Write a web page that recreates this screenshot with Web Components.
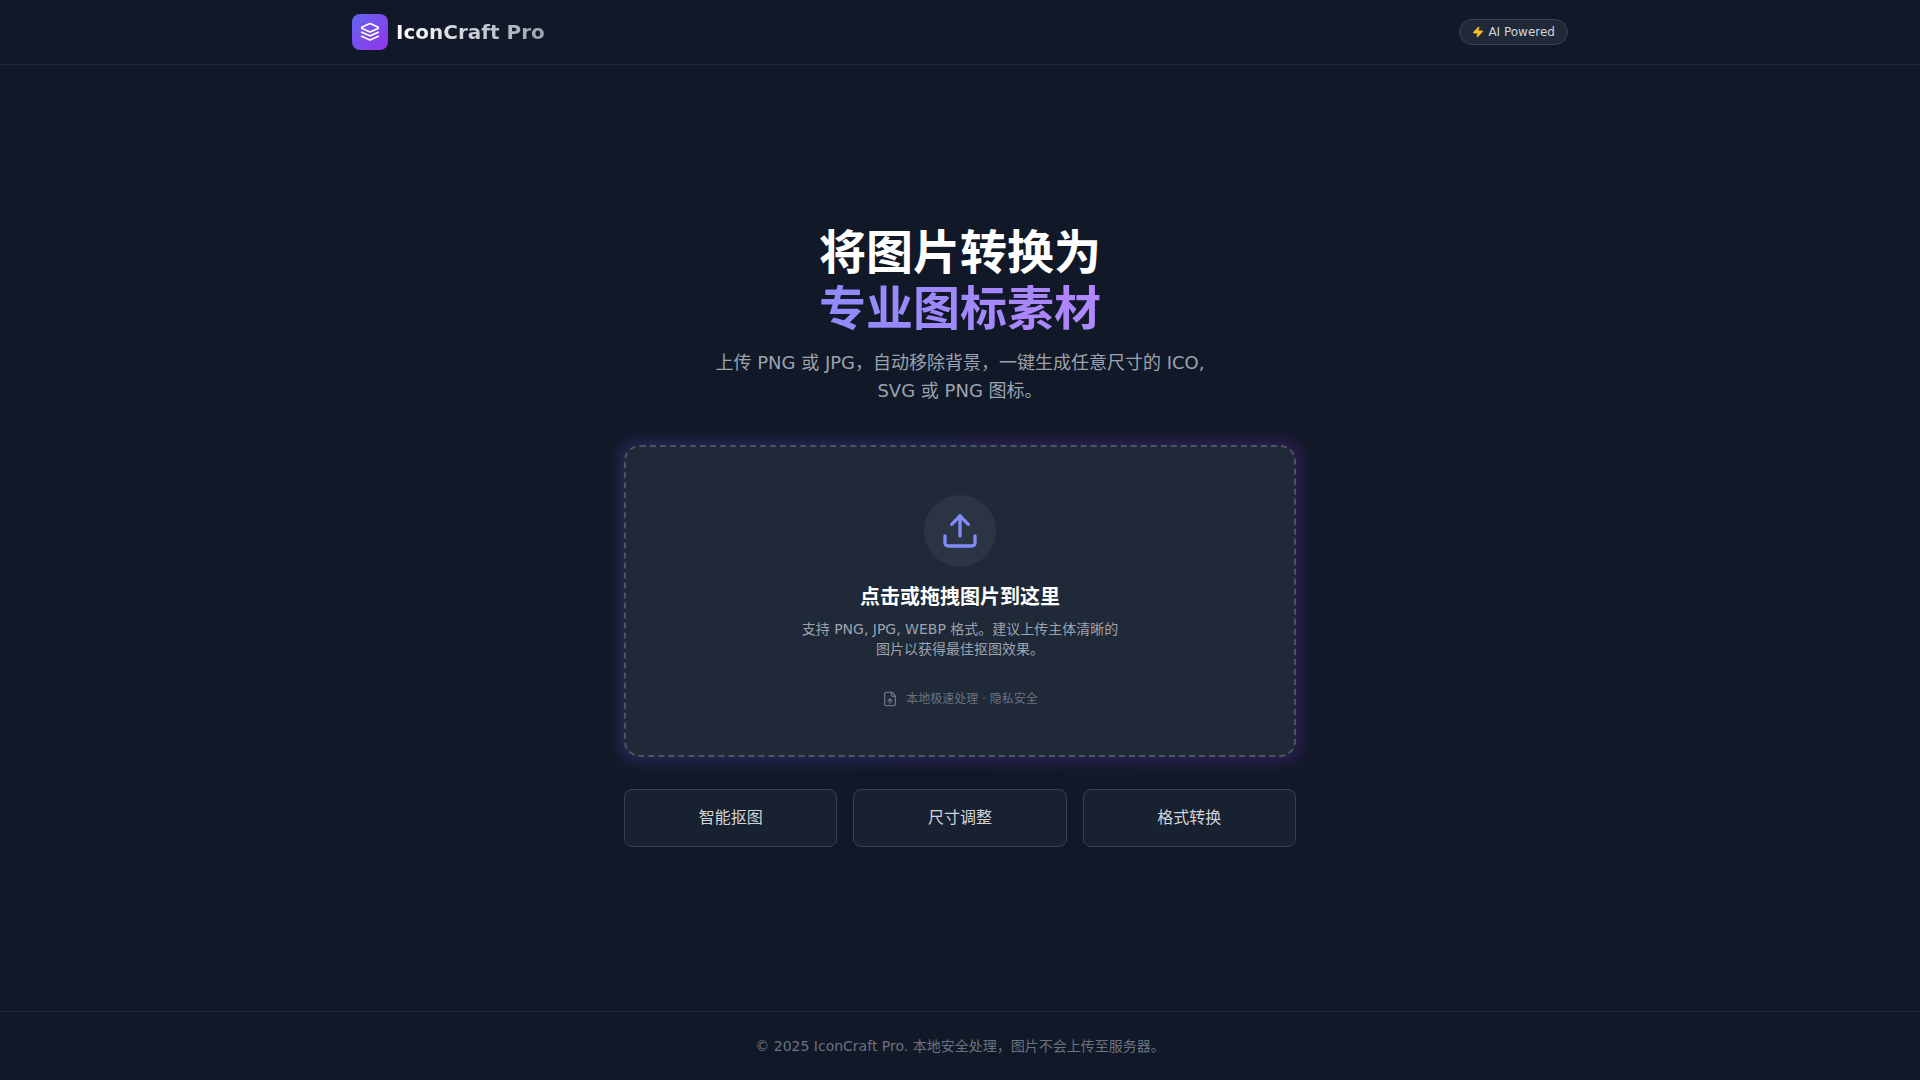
<!DOCTYPE html>
<html lang="zh-CN">
<head>
<meta charset="UTF-8">
<meta name="viewport" content="width=device-width, initial-scale=1.0">
<title>IconCraft Pro</title>
<style>
  body {
    margin: 0;
    background-color: #111827;
    color: #fff;
    font-family: "DejaVu Sans", "Noto Sans CJK SC", sans-serif;
    font-size: 16px;
    line-height: 24px;
  }
</style>
</head>
<body>
<icon-craft-app>
  <app-header slot="header">
    IconCraft Pro
    <status-badge slot="actions">AI Powered</status-badge>
  </app-header>

  <hero-title>
    将图片转换为
    <span slot="accent">专业图标素材</span>
    <span slot="description">上传 PNG 或 JPG，自动移除背景，一键生成任意尺寸的 ICO, SVG 或 PNG 图标。</span>
  </hero-title>

  <upload-zone>
    点击或拖拽图片到这里
    <span slot="hint">支持 PNG, JPG, WEBP 格式。建议上传主体清晰的图片以获得最佳抠图效果。</span>
    <span slot="note">本地极速处理 · 隐私安全</span>
  </upload-zone>

  <feature-list>
    <feature-card>智能抠图</feature-card>
    <feature-card>尺寸调整</feature-card>
    <feature-card>格式转换</feature-card>
  </feature-list>

  <app-footer slot="footer">© 2025 IconCraft Pro. 本地安全处理，图片不会上传至服务器。</app-footer>
</icon-craft-app>

<script>
class IconCraftApp extends HTMLElement {
  constructor() {
    super()
    this.attachShadow({ mode: 'open' })
  }

  connectedCallback() {
    this.shadowRoot.innerHTML = `
      <style>
        :host {
          min-height: 100vh;
          display: flex;
          flex-direction: column;
        }

        main {
          flex: 1;
          display: flex;
          flex-direction: column;
          align-items: center;
          justify-content: center;
          padding: 48px 16px 52px;
        }

        .content {
          width: 100%;
          max-width: 672px;
          display: flex;
          flex-direction: column;
        }
      </style>

      <slot name="header"></slot>
      <main>
        <div class="content"><slot></slot></div>
      </main>
      <slot name="footer"></slot>
    `
  }
}

class AppHeader extends HTMLElement {
  constructor() {
    super()
    this.attachShadow({ mode: 'open' })
  }

  connectedCallback() {
    this.shadowRoot.innerHTML = `
      <style>
        :host {
          display: block;
        }

        header {
          border-bottom: 1px solid #1f2937;
        }

        .bar {
          max-width: 1216px;
          height: 64px;
          margin: 0 auto;
          padding: 0 32px;
          display: flex;
          align-items: center;
          justify-content: space-between;
        }

        .brand {
          display: flex;
          align-items: center;
          gap: 8px;
        }

        .logo {
          display: flex;
          padding: 8px;
          border-radius: 8px;
          background: linear-gradient(to bottom right, #6366f1, #9333ea);
        }

        .name {
          font-size: 20px;
          font-weight: 700;
          line-height: 28px;
          color: transparent;
          background: linear-gradient(to right, #fff, #9ca3af);
          -webkit-background-clip: text;
          background-clip: text;
        }
      </style>

      <header>
        <div class="bar">
          <div class="brand">
            <div class="logo">
              <svg width="20" height="20" viewBox="0 0 24 24" fill="none" stroke="#fff" stroke-width="2" stroke-linecap="round" stroke-linejoin="round" aria-hidden="true">
                <path d="m12.83 2.18a2 2 0 0 0-1.66 0L2.6 6.08a1 1 0 0 0 0 1.83l8.58 3.91a2 2 0 0 0 1.66 0l8.58-3.9a1 1 0 0 0 0-1.83Z"/>
                <path d="m22 12.18-9.17 4.16a2 2 0 0 1-1.66 0L2 12.18"/>
                <path d="m22 17.18-9.17 4.16a2 2 0 0 1-1.66 0L2 17.18"/>
              </svg>
            </div>
            <span class="name"><slot></slot></span>
          </div>
          <slot name="actions"></slot>
        </div>
      </header>
    `
  }
}

class StatusBadge extends HTMLElement {
  constructor() {
    super()
    this.attachShadow({ mode: 'open' })
  }

  connectedCallback() {
    this.shadowRoot.innerHTML = `
      <style>
        :host {
          display: flex;
          align-items: center;
          gap: 4px;
          padding: 4px 12px;
          border: 1px solid #374151;
          border-radius: 999px;
          background-color: #1f2937;
          color: #d1d5db;
          font-size: 12px;
          line-height: 16px;
        }
      </style>

      <svg width="12" height="12" viewBox="0 0 24 24" fill="#fbbf24" stroke="#fbbf24" stroke-width="2" stroke-linecap="round" stroke-linejoin="round" aria-hidden="true">
        <path d="M4 14a1 1 0 0 1-.78-1.63l9.9-10.2a.5.5 0 0 1 .86.46l-1.92 6.02A1 1 0 0 0 13 10h7a1 1 0 0 1 .78 1.63l-9.9 10.2a.5.5 0 0 1-.86-.46l1.92-6.02A1 1 0 0 0 11 14z"/>
      </svg>
      <span><slot></slot></span>
    `
  }
}

class HeroTitle extends HTMLElement {
  constructor() {
    super()
    this.attachShadow({ mode: 'open' })
  }

  connectedCallback() {
    this.shadowRoot.innerHTML = `
      <style>
        :host {
          display: flex;
          flex-direction: column;
          align-items: center;
          gap: 12px;
          margin-bottom: 40px;
          text-align: center;
        }

        h1 {
          width: 100%;
          max-width: 512px;
          margin: 0;
          font-size: 47px;
          font-weight: 700;
          line-height: 56px;
        }

        .accent {
          display: block;
          color: transparent;
          background: linear-gradient(to right, #818cf8, #c084fc);
          -webkit-background-clip: text;
          background-clip: text;
        }

        p {
          max-width: 512px;
          margin: 0;
          color: #9ca3af;
          font-size: 18px;
          line-height: 28px;
        }
      </style>

      <h1>
        <slot></slot>
        <span class="accent"><slot name="accent"></slot></span>
      </h1>
      <p><slot name="description"></slot></p>
    `
  }
}

class UploadZone extends HTMLElement {
  constructor() {
    super()
    this.attachShadow({ mode: 'open' })
    this.onDrop = this.onDrop.bind(this)
  }

  onDrop(evt) {
    evt.preventDefault()
    this.input.files = evt.dataTransfer.files
  }

  connectedCallback() {
    this.render()

    this.input = this.shadowRoot.getElementById('file')
    this.zone = this.shadowRoot.getElementById('zone')
    this.zone.addEventListener('dragover', (evt) => evt.preventDefault())
    this.zone.addEventListener('drop', this.onDrop)
  }

  render() {
    this.shadowRoot.innerHTML = `
      <style>
        :host {
          display: block;
          position: relative;
        }

        .glow {
          position: absolute;
          inset: -4px;
          border-radius: 16px;
          background: linear-gradient(to right, #6366f1, #9333ea);
          filter: blur(8px);
          opacity: 0.25;
        }

        #zone {
          position: relative;
          display: flex;
          flex-direction: column;
          align-items: center;
          padding: 48px;
          border: 2px dashed #4b5563;
          border-radius: 16px;
          background-color: #1f2937;
          text-align: center;
          cursor: pointer;
        }

        #file {
          position: absolute;
          inset: 0;
          width: 100%;
          height: 100%;
          opacity: 0;
          cursor: pointer;
        }

        .circle {
          display: flex;
          padding: 16px;
          border-radius: 50%;
          background-color: #2b3443;
        }

        h2 {
          margin: 16px 0 8px;
          font-size: 20px;
          font-weight: 700;
          line-height: 28px;
        }

        p {
          max-width: 320px;
          margin: 0;
          color: #9ca3af;
          font-size: 14px;
          line-height: 20px;
        }

        .note {
          display: flex;
          align-items: center;
          gap: 8px;
          margin-top: 32px;
          color: #6b7280;
          font-size: 12px;
          line-height: 16px;
        }
      </style>

      <div class="glow"></div>
      <label id="zone" for="file">
        <div class="circle">
          <svg width="40" height="40" viewBox="0 0 24 24" fill="none" stroke="#818cf8" stroke-width="2" stroke-linecap="round" stroke-linejoin="round" aria-hidden="true">
            <path d="M21 15v4a2 2 0 0 1-2 2H5a2 2 0 0 1-2-2v-4"/>
            <path d="m17 8-5-5-5 5"/>
            <path d="M12 3v12"/>
          </svg>
        </div>
        <h2><slot></slot></h2>
        <p><slot name="hint"></slot></p>
        <div class="note">
          <svg width="16" height="16" viewBox="0 0 24 24" fill="none" stroke="currentColor" stroke-width="2" stroke-linecap="round" stroke-linejoin="round" aria-hidden="true">
            <path d="M15 2H6a2 2 0 0 0-2 2v16a2 2 0 0 0 2 2h12a2 2 0 0 0 2-2V7Z"/>
            <path d="M14 2v4a2 2 0 0 0 2 2h4"/>
            <path d="M12 12v6"/>
            <path d="m15 15-3-3-3 3"/>
          </svg>
          <slot name="note"></slot>
        </div>
        <input id="file" type="file" accept="image/png,image/jpeg,image/webp">
      </label>
    `
  }
}

class FeatureList extends HTMLElement {
  constructor() {
    super()
    this.attachShadow({ mode: 'open' })
  }

  connectedCallback() {
    this.shadowRoot.innerHTML = `
      <style>
        :host {
          display: grid;
          grid-template-columns: repeat(3, 1fr);
          gap: 16px;
          margin-top: 32px;
        }
      </style>

      <slot></slot>
    `
  }
}

class FeatureCard extends HTMLElement {
  constructor() {
    super()
    this.attachShadow({ mode: 'open' })
  }

  connectedCallback() {
    this.shadowRoot.innerHTML = `
      <style>
        :host {
          display: block;
          padding: 16px;
          border: 1px solid #374151;
          border-radius: 8px;
          background-color: #18212f;
          color: #d1d5db;
          text-align: center;
        }
      </style>

      <slot></slot>
    `
  }
}

class AppFooter extends HTMLElement {
  constructor() {
    super()
    this.attachShadow({ mode: 'open' })
  }

  connectedCallback() {
    this.shadowRoot.innerHTML = `
      <style>
        :host {
          display: block;
        }

        footer {
          padding: 24px 16px;
          border-top: 1px solid #1f2937;
          color: #6b7280;
          font-size: 14px;
          line-height: 20px;
          text-align: center;
        }
      </style>

      <footer><slot></slot></footer>
    `
  }
}

customElements.define('icon-craft-app', IconCraftApp)
customElements.define('app-header', AppHeader)
customElements.define('status-badge', StatusBadge)
customElements.define('hero-title', HeroTitle)
customElements.define('upload-zone', UploadZone)
customElements.define('feature-list', FeatureList)
customElements.define('feature-card', FeatureCard)
customElements.define('app-footer', AppFooter)
</script>
</body>
</html>
